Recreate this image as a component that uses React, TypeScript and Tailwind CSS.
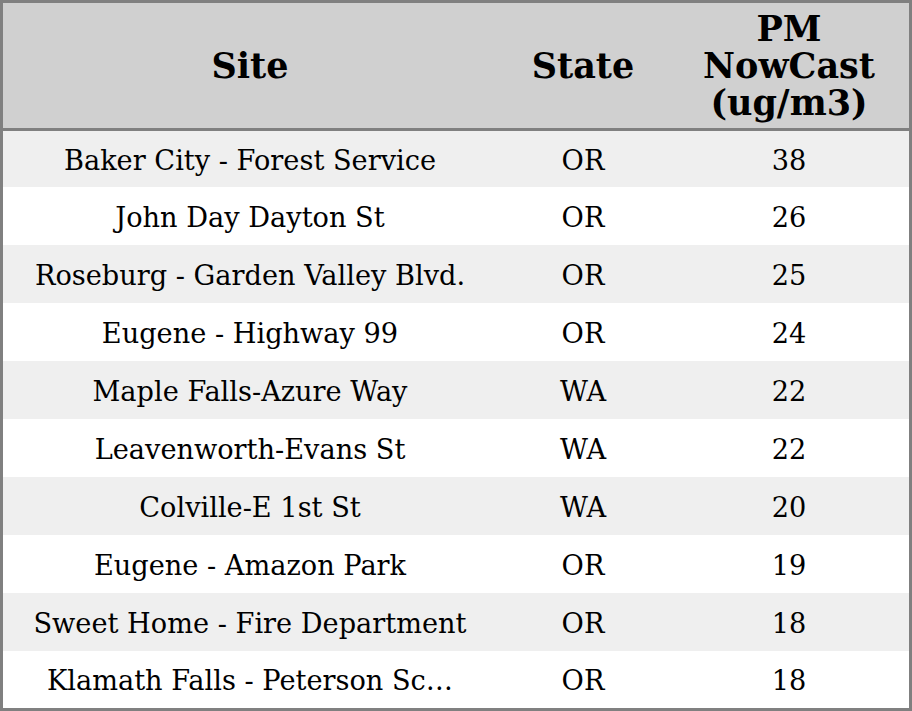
import React from "react";

const rows: [string, string, string][] = [
  ["Baker City - Forest Service", "OR", "38"],
  ["John Day Dayton St", "OR", "26"],
  ["Roseburg - Garden Valley Blvd.", "OR", "25"],
  ["Eugene - Highway 99", "OR", "24"],
  ["Maple Falls-Azure Way", "WA", "22"],
  ["Leavenworth-Evans St", "WA", "22"],
  ["Colville-E 1st St", "WA", "20"],
  ["Eugene - Amazon Park", "OR", "19"],
  ["Sweet Home - Fire Department", "OR", "18"],
  ["Klamath Falls - Peterson Sc…", "OR", "18"],
];

const heights = ["h-[56px]", "h-[58px]", "h-[58px]", "h-[58px]", "h-[58px]", "h-[58px]", "h-[58px]", "h-[58px]", "h-[58px]", "h-[57px]"];

export default function App() {
  return (
    <div
      className="w-[912px] h-[711px] border-[3px] border-[#808080] bg-white text-black overflow-hidden"
      style={{ fontFamily: '"DejaVu Serif", serif' }}
    >
      <div className="grid grid-cols-[494px_172px_240px] h-[128px] bg-[#d0d0d0] border-b-[3px] border-[#808080] font-bold text-[35px] leading-[37px]">
        <div className="flex items-center justify-center">Site</div>
        <div className="flex items-center justify-center">State</div>
        <div className="flex items-center justify-center text-center">
          PM
          <br />
          NowCast
          <br />
          (ug/m3)
        </div>
      </div>
      {rows.map((r, i) => (
        <div
          key={i}
          className={`grid grid-cols-[494px_172px_240px] ${heights[i]} pt-[4px] text-[27.2px] ${i % 2 === 0 ? "bg-[#efefef]" : "bg-white"}`}
        >
          <div className="flex items-center justify-center whitespace-nowrap">{r[0]}</div>
          <div className="flex items-center justify-center">{r[1]}</div>
          <div className="flex items-center justify-center">{r[2]}</div>
        </div>
      ))}
    </div>
  );
}
